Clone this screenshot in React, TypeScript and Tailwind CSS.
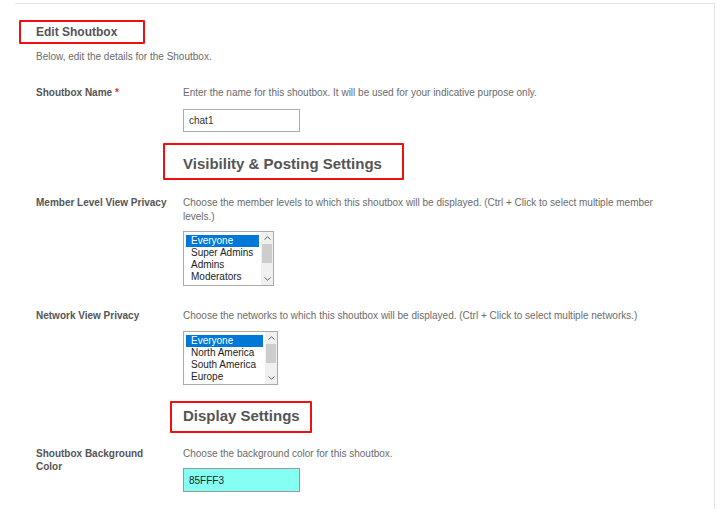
import React from "react";

function RedBox({ className }: { className: string }) {
  return <span className={`pointer-events-none absolute border-2 border-[#f01010] rounded-[1px] ${className}`} />;
}

function ListBox({ items, className }: { items: string[]; className: string }) {
  return (
    <div className={`flex border border-[#a9a9a9] bg-white ${className}`}>
      <div className="flex-1 pl-[2px] pr-[2px] pt-[3px] overflow-hidden">
        {items.map((item, i) => (
          <div
            key={item}
            className={`h-[12px] pl-[5px] text-[10px] leading-[12px] whitespace-nowrap ${
              i === 0 ? "bg-[#0078d7] text-white" : "text-[#222]"
            }`}
          >
            {item}
          </div>
        ))}
      </div>
      <div className="flex w-[12px] flex-col bg-[#f0f0f0]">
        <div className="flex h-[12px] items-center justify-center">
          <svg width="7" height="4" viewBox="0 0 7 4" fill="none">
            <path d="M0.5 3.5L3.5 0.8L6.5 3.5" stroke="#606060" strokeWidth="1" />
          </svg>
        </div>
        <div className="mx-[1px] h-[19px] bg-[#cdcdcd]" />
        <div className="flex-1" />
        <div className="flex h-[12px] items-center justify-center">
          <svg width="7" height="4" viewBox="0 0 7 4" fill="none">
            <path d="M0.5 0.5L3.5 3.2L6.5 0.5" stroke="#606060" strokeWidth="1" />
          </svg>
        </div>
      </div>
    </div>
  );
}

function Row({ label, desc, children, className }: { label: React.ReactNode; desc: string; children: React.ReactNode; className: string }) {
  return (
    <div className={`flex ${className}`}>
      <div className="w-[133px] mr-[14px] shrink-0 text-[10px] font-bold leading-[13px] text-[#555]">{label}</div>
      <div className="w-[490px]">
        <p className="text-[10px] leading-[14px] text-[#6b6b6b]">{desc}</p>
        {children}
      </div>
    </div>
  );
}

export default function App() {
  return (
    <div className="min-h-[525px] bg-white pl-[15px] pt-[3px]" style={{ fontFamily: '"Liberation Sans", Arial, sans-serif' }}>
      <div className="h-[506px] w-[700px] border-t border-r border-[#e4e4e4] pl-[21px] pt-[20px]">
        <h2 className="relative w-fit text-[12px] font-bold leading-[16px] text-[#555]">
          Edit Shoutbox
          <RedBox className="-left-[17px] -top-[4px] h-[24px] w-[126px]" />
        </h2>
        <p className="mt-[10px] text-[10px] leading-[14px] text-[#6b6b6b]">Below, edit the details for the Shoutbox.</p>

        <Row
          className="mt-[22px]"
          label={
            <>
              Shoutbox Name <span className="text-[#e53030]">*</span>
            </>
          }
          desc="Enter the name for this shoutbox. It will be used for your indicative purpose only."
        >
          <input
            readOnly
            value="chat1"
            className="mt-[9px] block h-[23px] w-[117px] border border-[#ababab] bg-white px-[5px] text-[10px] text-[#333] outline-none"
          />
        </Row>

        <h3 className="relative mt-[22px] ml-[147px] w-fit text-[15px] font-bold leading-[20px] text-[#555]">
          Visibility &amp; Posting Settings
          <RedBox className="-left-[20px] -top-[11px] h-[37px] w-[241px]" />
        </h3>

        <Row
          className="mt-[22px]"
          label="Member Level View Privacy"
          desc="Choose the member levels to which this shoutbox will be displayed. (Ctrl + Click to select multiple member levels.)"
        >
          <ListBox className="mt-[7px] h-[55px] w-[91px]" items={["Everyone", "Super Admins", "Admins", "Moderators"]} />
        </Row>

        <Row
          className="mt-[23px]"
          label="Network View Privacy"
          desc="Choose the networks to which this shoutbox will be displayed. (Ctrl + Click to select multiple networks.)"
        >
          <ListBox className="mt-[8px] h-[54px] w-[95px]" items={["Everyone", "North America", "South America", "Europe"]} />
        </Row>

        <h3 className="relative mt-[21px] ml-[147px] w-fit text-[15px] font-bold leading-[20px] text-[#555]">
          Display Settings
          <RedBox className="-left-[13px] -top-[5px] h-[32px] w-[142px]" />
        </h3>

        <Row className="mt-[21px]" label="Shoutbox Background Color" desc="Choose the background color for this shoutbox.">
          <input
            readOnly
            value="85FFF3"
            className="mt-[7px] block h-[24px] w-[117px] border border-[#9a9a9a] bg-[#85fff3] px-[5px] text-[10px] text-[#222] outline-none"
          />
        </Row>
      </div>
    </div>
  );
}
